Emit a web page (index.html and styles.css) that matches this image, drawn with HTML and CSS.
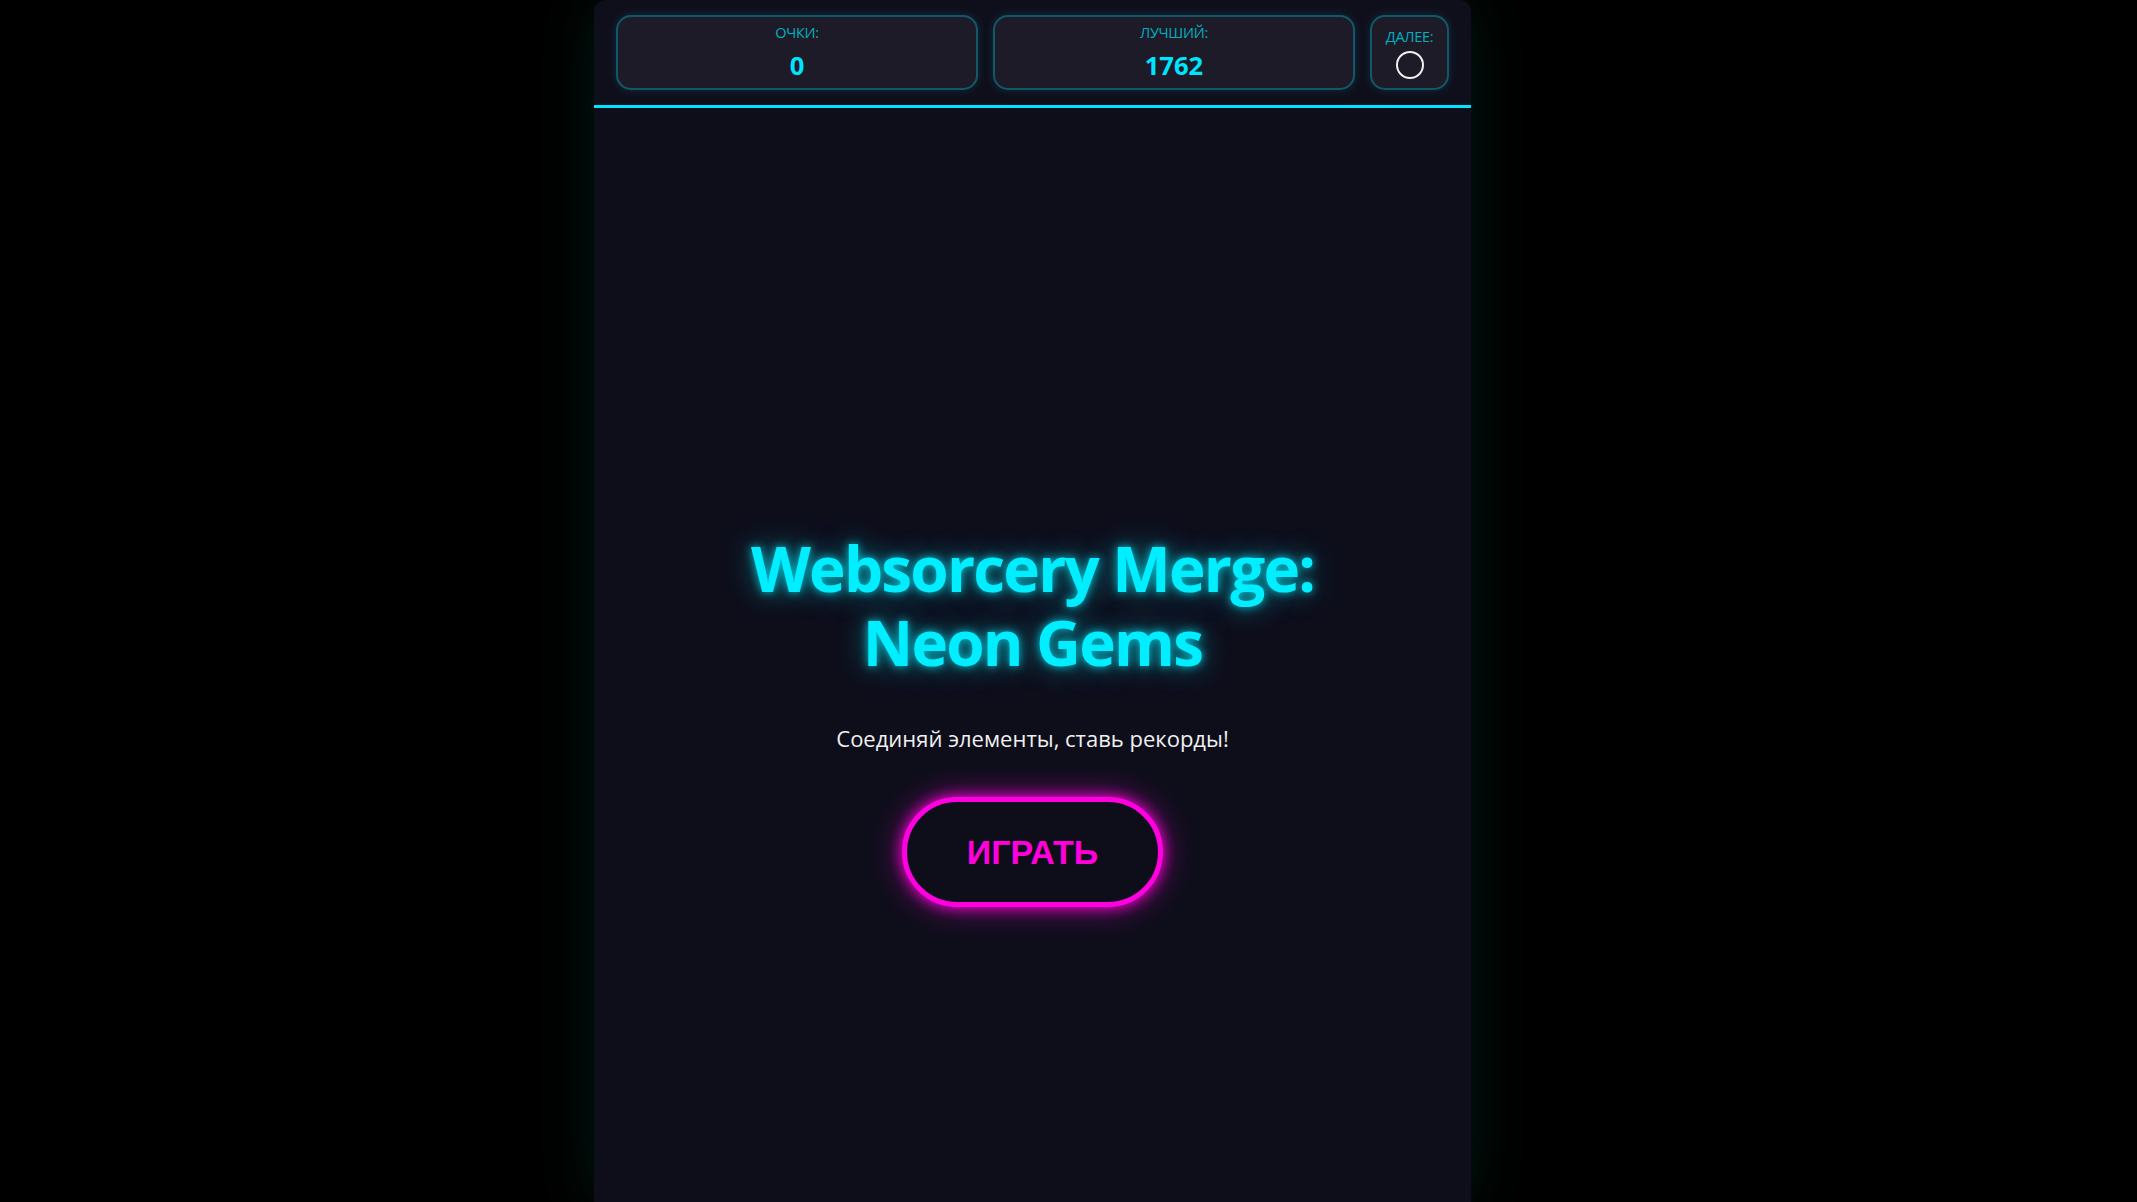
FILE: index.html
```html
<!DOCTYPE html>
<html>
<head>
  <title>Websorcery Merge: Neon Gems</title>
  <meta charset="utf-8">
  <link rel="stylesheet" href="styles.css">
</head>
<body>
  <div class="game">
    <header class="scoreboard">
      <div class="stat stat-wide">
        <span class="stat-label">ОЧКИ:</span>
        <span class="stat-value" id="score">0</span>
      </div>
      <div class="stat stat-wide">
        <span class="stat-label">ЛУЧШИЙ:</span>
        <span class="stat-value" id="best">1762</span>
      </div>
      <div class="stat stat-next">
        <span class="stat-label">ДАЛЕЕ:</span>
        <span class="next-gem" id="nextGem"></span>
      </div>
    </header>

    <main class="start-screen">
      <h1 class="title">Websorcery Merge: Neon Gems</h1>
      <p class="tagline">Соединяй элементы, ставь рекорды!</p>
      <button class="play-btn" id="playBtn">ИГРАТЬ</button>
    </main>
  </div>
</body>
</html>
```

FILE: styles.css
```css
body {
  margin: 0;
  height: 100vh;
  overflow: hidden;
  background-color: #000;
  font-family: 'Segoe UI', 'Open Sans', sans-serif;
  color: #f0f0f0;
}

.game {
  width: 877px;
  height: 100vh;
  margin-left: 594px;
  background-color: #0e0e1b;
  border-radius: 12px 12px 0 0;
  box-shadow: 0 0 60px rgba(0, 255, 200, 0.1);
}

.scoreboard {
  display: flex;
  gap: 15px;
  padding: 15px 22px;
  background-color: #0f0f1b;
  border-radius: 12px 12px 0 0;
  border-bottom: 3px solid #00e5ff;
}

.stat {
  display: flex;
  flex-direction: column;
  align-items: center;
  justify-content: center;
  height: 75px;
  box-sizing: border-box;
  background-color: #1c1b27;
  border: 2px solid rgba(0, 229, 255, 0.3);
  border-radius: 15px;
  box-shadow: 0 0 10px rgba(0, 229, 255, 0.15);
}

.stat-wide {
  flex: 1;
}

.stat-next {
  width: 79px;
}

.stat-label {
  font-size: 14.5px;
  line-height: 20px;
  letter-spacing: -0.3px;
  color: #00b0c0;
}

.stat-value {
  font-size: 25.6px;
  line-height: 32px;
  margin-top: 7px;
  font-weight: bold;
  color: #00e5ff;
}

.next-gem {
  width: 28px;
  height: 28px;
  margin-top: 4px;
  box-sizing: border-box;
  border: 2px solid #f0f0f0;
  border-radius: 50%;
}

.start-screen {
  display: flex;
  flex-direction: column;
  align-items: center;
  padding-top: 423px;
  text-align: center;
}

.title {
  max-width: 640px;
  margin: 0 0 45px;
  font-size: 62px;
  line-height: 1.2;
  letter-spacing: -1.8px;
  font-weight: bold;
  color: #00eeff;
  text-shadow: 0 0 10px rgba(0, 238, 255, 0.8), 0 0 28px rgba(0, 238, 255, 0.5);
}

.tagline {
  margin: 0 0 46px;
  font-size: 22px;
  line-height: 1.2;
  color: #f0f0f0;
}

.play-btn {
  padding: 30px 60px;
  font-family: 'Liberation Sans', Arial, sans-serif;
  font-size: 34px;
  line-height: 40px;
  font-weight: bold;
  color: #ff00dd;
  background-color: #0e0e1b;
  border: 5px solid #ff00e0;
  border-radius: 60px;
  box-shadow: 0 0 14px #ff00dd, 0 0 32px rgba(255, 0, 221, 0.5);
  cursor: pointer;
}
```
